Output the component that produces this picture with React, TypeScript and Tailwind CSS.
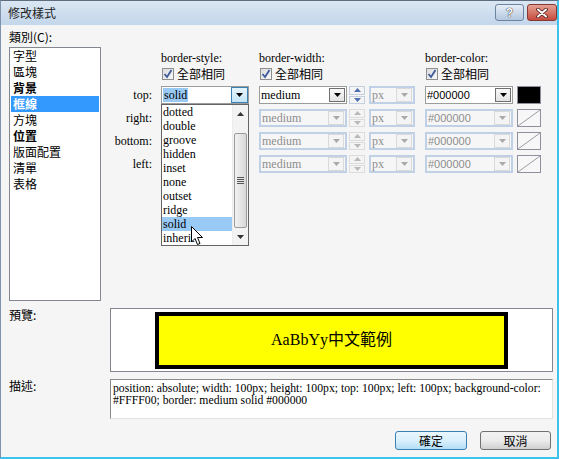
import React from "react"

const serif = "font-['Liberation_Serif','Noto_Sans_CJK_TC',serif]"
const cjk = "font-['Noto_Sans_CJK_TC','Noto_Sans',sans-serif]"
const sans = "font-['Liberation_Sans','Noto_Sans_CJK_TC',sans-serif]"

const categories = [
  { name: "字型" },
  { name: "區塊" },
  { name: "背景", bold: true },
  { name: "框線", bold: true, selected: true },
  { name: "方塊" },
  { name: "位置", bold: true },
  { name: "版面配置" },
  { name: "清單" },
  { name: "表格" },
]

const styleOptions = ["dotted", "double", "groove", "hidden", "inset", "none", "outset", "ridge", "solid", "inherit"]

function Arrow({ color }: { color: string }) {
  return (
    <svg width="7" height="4" viewBox="0 0 7 4">
      <path d="M0 0 H7 L3.5 4 Z" fill={color} />
    </svg>
  )
}

function DropButton({ state }: { state: "normal" | "open" | "disabled" }) {
  if (state === "disabled") {
    return (
      <div className="w-[16px] h-[14px] mr-[1px] flex items-center justify-center border border-[#dadada] bg-[#f4f4f4]">
        <Arrow color="#a9a9a9" />
      </div>
    )
  }
  if (state === "open") {
    return (
      <div className="w-[17px] h-[16px] flex items-center justify-center border border-[#3c7fb1] bg-gradient-to-b from-[#e5f4fc] to-[#c4e5f6]">
        <Arrow color="#000" />
      </div>
    )
  }
  return (
    <div className="w-[16px] h-[14px] mr-[1px] flex items-center justify-center border border-[#707070] bg-gradient-to-b from-[#f8f8f8] to-[#e2e2e2]">
      <Arrow color="#000" />
    </div>
  )
}

function Select({
  value,
  width,
  disabled,
  font,
  open,
  highlight,
  children,
}: {
  value: string
  width: string
  disabled?: boolean
  font: string
  open?: boolean
  highlight?: boolean
  children?: React.ReactNode
}) {
  return (
    <div
      className={`relative h-[18px] ${width} flex items-center ${
        disabled ? "border-2 border-[#bfd0e7] bg-[#f6f6f6] text-[#8d8d8d]" : "border border-[#9c9c9c] bg-white text-black"
      }`}
    >
      <div className={`flex-1 min-w-0 pl-[1px] ${font} whitespace-nowrap overflow-hidden`}>
        <span className={highlight ? "bg-[#99c9f5] px-[1px]" : ""}>{value}</span>
      </div>
      <DropButton state={disabled ? "disabled" : open ? "open" : "normal"} />
      {children}
    </div>
  )
}

function Spinner({ disabled }: { disabled?: boolean }) {
  const c = disabled ? "#b9b9b9" : "#4d6fb0"
  return (
    <div className="w-[16px] h-[18px] flex flex-col gap-[1px]">
      <div className={`flex-1 flex items-center justify-center border ${disabled ? "border-[#dcdcdc]" : "border-[#c4cfe0]"} bg-[#f4f4f4]`}>
        <svg width="7" height="4" viewBox="0 0 7 4">
          <path d="M0 4 H7 L3.5 0 Z" fill={c} />
        </svg>
      </div>
      <div className={`flex-1 flex items-center justify-center border ${disabled ? "border-[#dcdcdc]" : "border-[#c4cfe0]"} bg-[#f4f4f4]`}>
        <svg width="7" height="4" viewBox="0 0 7 4">
          <path d="M0 0 H7 L3.5 4 Z" fill={c} />
        </svg>
      </div>
    </div>
  )
}

function Swatch({ filled }: { filled?: boolean }) {
  if (filled) return <div className="w-[24px] h-[18px] border border-[#8f8f9d] bg-black" />
  return (
    <div className="w-[24px] h-[18px] border border-[#8f8f9d] bg-[#f7f7f7]">
      <svg width="22" height="16" viewBox="0 0 22 16">
        <path d="M0 16 L22 0" stroke="#9a9aa6" strokeWidth="1" />
      </svg>
    </div>
  )
}

function Checkbox() {
  return (
    <div className="w-[12px] h-[12px] border border-[#8e8f8f] bg-gradient-to-br from-[#dcdcdc] to-[#f8f8f8] flex items-center justify-center">
      <svg width="10" height="10" viewBox="0 0 10 10">
        <path d="M1.5 5 L4 8 L8.5 1" stroke="#3b5b9c" strokeWidth="1.8" fill="none" />
      </svg>
    </div>
  )
}

function SameAll() {
  return (
    <div className="flex items-center gap-[3px]">
      <Checkbox />
      <span className={`${cjk} text-[12px] leading-[14px] text-black`}>全部相同</span>
    </div>
  )
}

function Dropdown() {
  return (
    <div className="absolute left-[-1px] top-[17px] z-10 w-[88px] h-[142px] border border-[#646464] bg-white flex overflow-hidden">
      <div className="w-[70px] flex flex-col">
        {styleOptions.map((o) => (
          <div
            key={o}
            className={`h-[14px] leading-[14px] pl-[1px] ${serif} text-[12px] text-black ${o === "solid" ? "bg-[#99c9f5]" : ""}`}
          >
            {o}
          </div>
        ))}
      </div>
      {/* scrollbar */}
      <div className="w-[16px] flex flex-col bg-[#f3f3f3] border-l border-[#ececec]">
        <div className="h-[17px] flex items-center justify-center">
          <svg width="7" height="4" viewBox="0 0 7 4">
            <path d="M0 4 H7 L3.5 0 Z" fill="#333" />
          </svg>
        </div>
        <div className="mt-[11px] h-[95px] mx-[1px] rounded-[2px] border border-[#9b9b9b] bg-gradient-to-r from-[#f2f2f2] to-[#d8d8d8] flex flex-col items-center justify-center gap-[1px]">
          <div className="w-[7px] h-[1px] bg-[#555]" />
          <div className="w-[7px] h-[1px] bg-[#555]" />
          <div className="w-[7px] h-[1px] bg-[#555]" />
          <div className="w-[7px] h-[1px] bg-[#555]" />
        </div>
        <div className="h-[17px] flex items-center justify-center">
          <svg width="7" height="4" viewBox="0 0 7 4">
            <path d="M0 0 H7 L3.5 4 Z" fill="#333" />
          </svg>
        </div>
      </div>
      {/* mouse pointer */}
      <svg className="absolute left-[29px] top-[121px]" width="13" height="20" viewBox="0 0 13 20">
        <path d="M0.5 0.5 L0.5 16 L4 12.5 L6.5 18.5 L9 17.5 L6.5 11.5 L11.5 11.5 Z" fill="#fff" stroke="#000" strokeWidth="1" strokeLinejoin="round" />
      </svg>
    </div>
  )
}

function SideRow({ label, first }: { label: string; first?: boolean }) {
  return (
    <div className="flex items-center h-[18px]">
      <div className={`w-[51px] text-right ${serif} text-[12px] text-black`}>{label}</div>
      <div className="ml-[9px]">
        {/* rows below "top" sit under the open list, so their value is not shown */}
        <Select value={first ? "solid" : ""} width="w-[88px]" font={`${serif} text-[12px]`} disabled={!first} open={first} highlight={first}>
          {first && <Dropdown />}
        </Select>
      </div>
      <div className="ml-[10px]">
        <Select value="medium" width="w-[88px]" font={`${serif} text-[12px]`} disabled={!first} />
      </div>
      <div className="ml-[2px]">
        <Spinner disabled={!first} />
      </div>
      <div className="ml-[4px]">
        <Select value="px" width="w-[46px]" font={`${serif} text-[12px]`} disabled />
      </div>
      <div className="ml-[10px]">
        <Select value="#000000" width="w-[88px]" font={`${sans} text-[11px]`} disabled={!first} />
      </div>
      <div className="ml-[4px]">
        <Swatch filled={first} />
      </div>
    </div>
  )
}

export default function App() {
  return (
    <div className="w-[561px] h-[459px] bg-white flex overflow-hidden">
      <div className="w-[559px] h-[459px] flex flex-col bg-[#f5f5f5] border-l border-l-[#7e93ab] border-t border-t-[#5d6e80] border-r-2 border-r-[#3dc2ec] border-b-2 border-b-[#3dc2ec]">
        {/* Title bar */}
        <div className="h-[24px] shrink-0 flex items-start bg-gradient-to-b from-[#dbe6f2] to-[#c3d6eb]">
          <div className={`pl-[7px] h-[24px] leading-[24px] ${cjk} text-[12px] text-[#1e1e1e]`}>修改樣式</div>
          <div className="ml-auto mt-[3px] flex gap-[3px]">
            <div className="w-[29px] h-[17px] rounded-[3px] border border-[#6d84a0] bg-gradient-to-b from-[#e6eef7] to-[#b5c8df] flex items-center justify-center">
              <span className={`${sans} font-bold text-[12px] leading-[12px] text-white [text-shadow:0_0_1px_#222,0_0_1px_#222]`}>?</span>
            </div>
            <div className="w-[30px] h-[17px] rounded-[3px] border border-[#86372f] bg-gradient-to-b from-[#e3a193] to-[#c5493d] flex items-center justify-center">
              <svg width="12" height="10" viewBox="0 0 12 10">
                <path d="M2 1.5 L10 8.5 M10 1.5 L2 8.5" stroke="#4a1a16" strokeWidth="3.6" strokeLinecap="round" />
                <path d="M2 1.5 L10 8.5 M10 1.5 L2 8.5" stroke="#fff" strokeWidth="2" strokeLinecap="round" />
              </svg>
            </div>
          </div>
        </div>

        {/* Body */}
        <div className="flex-1 flex flex-col pl-[8px]">
          <div className="flex pt-[4px]">
            {/* category */}
            <div className="w-[92px] flex flex-col">
              <div className={`h-[16px] leading-[16px] ${cjk} text-[12px] text-black`}>類別(C):</div>
              <div className="mt-[2px] h-[254px] border border-[#828790] bg-white px-[1px]">
                {categories.map((c) => (
                  <div
                    key={c.name}
                    className={`h-[16px] leading-[16px] pl-[2px] ${cjk} text-[12px] ${c.bold ? "font-bold" : ""} ${
                      c.selected ? "bg-[#3399ff] text-white" : "text-black"
                    }`}
                  >
                    {c.name}
                  </div>
                ))}
              </div>
            </div>

            {/* border settings */}
            <div className="flex-1 flex flex-col">
              <div className={`mt-[21px] h-[16px] leading-[16px] flex ${serif} text-[12px] text-black`}>
                <div className="w-[60px]" />
                <div className="w-[98px]">border-style:</div>
                <div className="w-[166px]">border-width:</div>
                <div>border-color:</div>
              </div>
              <div className="h-[16px] flex items-center">
                <div className="w-[61px]" />
                <div className="w-[98px]">
                  <SameAll />
                </div>
                <div className="w-[166px]">
                  <SameAll />
                </div>
                <SameAll />
              </div>
              <div className="mt-[4px] flex flex-col gap-[5px]">
                <SideRow label="top:" first />
                <SideRow label="right:" />
                <SideRow label="bottom:" />
                <SideRow label="left:" />
              </div>
            </div>
          </div>

          {/* preview */}
          <div className="mt-[7px] flex">
            <div className={`w-[101px] leading-[14px] ${cjk} text-[12px] text-black`}>預覽:</div>
            <div className="w-[443px] h-[64px] border border-[#828790] bg-white flex items-center justify-center">
              <div className={`w-[353px] h-[57px] border-4 border-black bg-[#ffff00] flex items-center justify-center ${serif} text-[16px] text-black`}>
                AaBbYy中文範例
              </div>
            </div>
          </div>

          {/* description */}
          <div className="mt-[7px] flex">
            <div className={`w-[101px] leading-[14px] ${cjk} text-[12px] text-black`}>描述:</div>
            <div className={`w-[443px] h-[40px] border border-t-[#8a8a8a] border-l-[#8a8a8a] border-r-[#e3e3e3] border-b-[#e3e3e3] bg-white pl-[2px] pt-[3px] ${serif} text-[11.7px] leading-[12px] text-black whitespace-nowrap`}>
              position: absolute; width: 100px; height: 100px; top: 100px; left: 100px; background-color:
              <br />
              #FFFF00; border: medium solid #000000
            </div>
          </div>

          {/* buttons */}
          <div className="mt-[12px] flex justify-end gap-[13px] pr-[6px]">
            <button className={`w-[72px] h-[19px] rounded-[3px] border border-[#3c7fb1] bg-gradient-to-b from-[#eaf6fd] via-[#d9f0fc] to-[#b3def6] ${cjk} text-[12px] leading-[17px] text-black`}>
              確定
            </button>
            <button className={`w-[71px] h-[19px] rounded-[3px] border border-[#707070] bg-gradient-to-b from-[#f2f2f2] via-[#ebebeb] to-[#d0d0d0] ${cjk} text-[12px] leading-[17px] text-black`}>
              取消
            </button>
          </div>
        </div>
      </div>
    </div>
  )
}
